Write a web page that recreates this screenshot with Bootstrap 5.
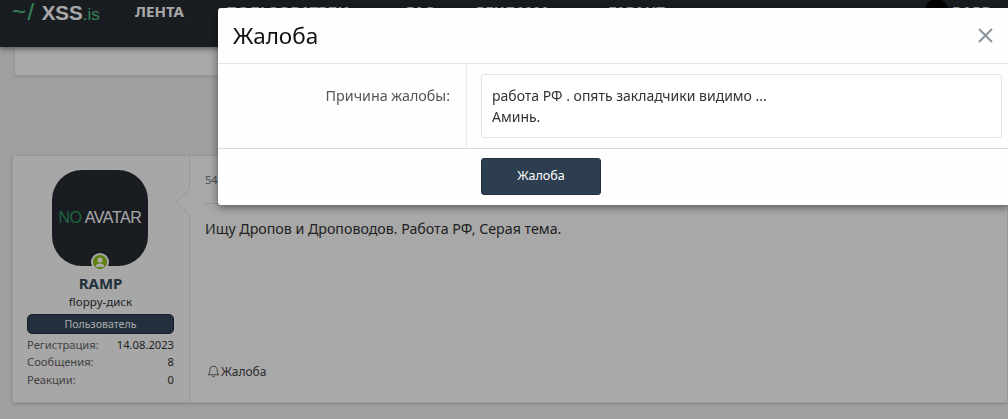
<!DOCTYPE html>
<html lang="ru">
  <head>
    <meta charset="UTF-8" />
    <meta name="viewport" content="width=device-width, initial-scale=1.0" />
    <title>Жалоба</title>
    <link
      href="https://cdn.jsdelivr.net/npm/bootstrap@5.3.3/dist/css/bootstrap.min.css"
      rel="stylesheet"
    />
    <style>
      html,
      body {
        height: 100%;
        overflow: hidden;
      }
      body {
        background: #f1f2f4;
        font-family: "Noto Sans", "Open Sans", sans-serif;
        font-size: 14px;
        color: #333;
      }
      .top-bar {
        height: 47px;
        background: #262c35;
        box-shadow: 0 2px 5px rgba(0, 0, 0, 0.45);
        padding-left: 12px;
        color: #fff;
        position: relative;
        z-index: 1;
      }
      .logo-text {
        font-family: "Liberation Sans", sans-serif;
        width: 123px;
        line-height: 24px;
      }
      .logo-tilde {
        color: #55c585;
        font-size: 24px;
        letter-spacing: 1.5px;
        margin-right: 6px;
      }
      .logo-xss {
        font-weight: 700;
        font-size: 20.500px;
        color: #fff;
      }
      .logo-is {
        color: #55c585;
        font-size: 17px;
      }
      .top-link {
        font-weight: 700;
        font-size: 15px;
        line-height: 22px;
        color: #fff;
        text-decoration: none;
      }
      .link-a { width: 91px; }
      .link-b { width: 180px; }
      .link-c { width: 70px; }
      .link-d { width: 132px; }
      .link-e { width: 317px; }
      .user-dot {
        width: 23px;
        height: 23px;
        border-radius: 50%;
        background: #000;
        margin: -1px 4px 0 0;
      }
      .old-card {
        height: 29px;
        margin-left: 14px;
        background: #fff;
        border: 1px solid #e6e7e9;
        border-top: 0;
        box-shadow: 0 1px 2px rgba(0, 0, 0, 0.12);
      }
      .post-card {
        margin-top: 79px;
        margin-left: 12px;
        height: 248px;
        background: #fff;
        border: 1px solid #e8e9eb;
        box-shadow: 0 1px 3px rgba(0, 0, 0, 0.18);
      }
      .user-cell {
        width: 177px;
        flex: none;
        padding: 14px 15px 0 14px;
        border-right: 1px solid #e4e5e7;
        position: relative;
        background: #fdfdfd;
      }
      .user-cell::before,
      .user-cell::after {
        content: "";
        position: absolute;
        top: 32px;
        border: 14px solid transparent;
        border-left: 0;
      }
      .user-cell::before {
        right: -1px;
        border-right-color: #e4e5e7;
      }
      .user-cell::after {
        right: -2px;
        border-right-color: #fff;
      }
      .avatar-box {
        width: 96px;
        height: 96px;
        margin-left: 25px;
        border-radius: 30px;
        background: #262c35;
        font-family: "Liberation Sans", sans-serif;
        font-size: 16px;
        letter-spacing: -0.4px;
        color: #fff;
        position: relative;
      }
      .avatar-no {
        color: #2f9a62;
        margin-right: 3px;
      }
      .online-dot {
        position: absolute;
        left: 39px;
        bottom: -5px;
        width: 18px;
        height: 18px;
        border-radius: 50%;
        background: #8cc314;
        border: 2px solid #fff;
      }
      .user-name {
        margin-top: 7px;
        font-size: 15px;
        line-height: 20px;
        font-weight: 700;
        color: #34495e;
      }
      .user-title {
        font-size: 11.500px;
        line-height: 17px;
      }
      .user-role {
        display: block;
        margin-top: 4px;
        height: 20px;
        line-height: 18px;
        background: #34495e;
        border: 1px solid #1f2c3a;
        border-radius: 5px;
        font-size: 10.600px;
        color: #fff;
      }
      .user-stats {
        margin-top: 2px;
        font-size: 11.200px;
        line-height: 17.300px;
        color: #666;
      }
      .stat-val {
        color: #333;
      }
      .post-cell {
        padding: 16px 15px 0;
        min-width: 0;
      }
      .post-date {
        font-size: 11px;
        color: #777;
        height: 32px;
        border-bottom: 1px solid #e4e5e7;
      }
      .post-text {
        margin-top: 15px;
        font-size: 14.200px;
        line-height: 20px;
      }
      .post-report {
        margin-top: 124px;
        margin-left: 2px;
        gap: 1px;
        font-size: 12px;
        line-height: 17px;
        color: #444;
        text-decoration: none;
      }
      .page-shade {
        position: fixed;
        inset: 0;
        background: #000;
        opacity: 0.34;
        z-index: 2;
      }
      .report-dialog {
        position: absolute;
        left: 218px;
        top: 8px;
        right: 0;
        width: auto;
        z-index: 3;
        border: 0;
        border-radius: 3px 0 0 3px;
        box-shadow: 0 2px 9px rgba(0, 0, 0, 0.5);
        background: #fefefe;
      }
      .report-head {
        height: 56px;
        padding: 0 15px 0 15px;
        border-bottom: 1px solid #e4e5e7;
      }
      .report-title {
        font-size: 22.500px;
        line-height: 28px;
        font-weight: 400;
        color: #111;
      }
      .report-x {
        width: 15px;
        height: 15px;
        margin-right: 0;
        border: 0;
        padding: 0;
        background: none;
        line-height: 0;
      }
      .report-row {
        height: 85px;
        border-bottom: 1px solid #d9dbdd;
      }
      .report-label {
        width: 249px;
        flex: none;
        padding: 22px 16px 0 0;
        text-align: right;
        color: #555;
        font-size: 14.300px;
        line-height: 20px;
        border-right: 1px solid #e9eaec;
      }
      .report-field {
        flex: 1;
        padding: 10px 6px 10px 14px;
      }
      .report-area {
        height: 64px;
        padding: 10px 10px 8px;
        font-size: 14px;
        line-height: 21px;
        color: #333;
        border: 1px solid #e2e3e5;
        border-radius: 3px;
        resize: none;
        background: #fff;
      }
      .report-foot {
        height: 56px;
        padding: 9px 0 0 263px;
      }
      .report-btn {
        width: 120px;
        height: 37px;
        padding: 0;
        font-size: 12.500px;
        background: #2c3e50;
        border: 1px solid #22303f;
        border-radius: 3px;
        color: #fff;
      }
    </style>
  </head>
  <body>
    <header class="top-bar d-flex">
      <div class="logo-text">
        <span class="logo-tilde">~/</span><span class="logo-xss">XSS</span><span class="logo-is">.is</span>
      </div>
      <nav class="d-flex flex-grow-1">
        <a class="top-link link-a" href="#">ЛЕНТА</a>
        <a class="top-link link-b" href="#">ПОЛЬЗОВАТЕЛИ</a>
        <a class="top-link link-c" href="#">FAQ</a>
        <a class="top-link link-d" href="#">РЕКЛАМА</a>
        <a class="top-link link-e" href="#">ГАРАНТ</a>
        <span class="user-dot flex-shrink-0"></span>
        <a class="top-link" href="#">RAPP</a>
      </nav>
    </header>

    <div class="old-card"></div>

    <article class="post-card d-flex">
      <div class="user-cell text-center">
        <div class="avatar-box d-flex align-items-center justify-content-center">
          <span><span class="avatar-no">NO</span>AVATAR</span>
          <span class="online-dot d-flex align-items-center justify-content-center">
            <svg width="12" height="12" viewBox="0 0 12 12" fill="#fff">
              <circle cx="6" cy="4" r="2.600" />
              <path d="M1.500 11c0-2.600 2-3.600 4.500-3.600s4.500 1 4.500 3.600z" />
            </svg>
          </span>
        </div>
        <div class="user-name">RAMP</div>
        <div class="user-title">floppy-диск</div>
        <span class="user-role">Пользователь</span>
        <div class="user-stats">
          <div class="d-flex justify-content-between"><span>Регистрация:</span><span class="stat-val">14.08.2023</span></div>
          <div class="d-flex justify-content-between"><span>Сообщения:</span><span class="stat-val">8</span></div>
          <div class="d-flex justify-content-between"><span>Реакции:</span><span class="stat-val">0</span></div>
        </div>
      </div>
      <div class="post-cell flex-grow-1">
        <div class="post-date">54</div>
        <div class="post-text">Ищу Дропов и Дроповодов. Работа РФ, Серая тема.</div>
        <a class="post-report d-inline-flex align-items-center" href="#">
          <svg width="13" height="13" viewBox="0 0 16 16" fill="none" stroke="#555" stroke-width="1.100">
            <path d="M8 1.500c-2.800 0-4.500 2-4.500 4.700 0 3.300-1.200 4.800-2.300 5.800h13.600c-1.100-1-2.300-2.500-2.300-5.800C12.500 3.500 10.800 1.500 8 1.500z" />
            <path d="M6.300 13.200c.2 1 .9 1.500 1.700 1.500s1.500-.5 1.700-1.500" />
          </svg>
          Жалоба
        </a>
      </div>
    </article>

    <div class="page-shade"></div>

    <div class="modal-content report-dialog">
      <div class="report-head d-flex align-items-center justify-content-between">
        <h5 class="report-title m-0">Жалоба</h5>
        <button type="button" class="report-x" aria-label="Закрыть">
          <svg width="15" height="15" viewBox="0 0 15 15" stroke="#8a949c" stroke-width="2" fill="none">
            <path d="M1 1l13 13M14 1L1 14" />
          </svg>
        </button>
      </div>
      <div class="report-row d-flex">
        <div class="report-label">Причина жалобы:</div>
        <div class="report-field">
          <textarea class="form-control report-area" readonly>работа РФ . опять закладчики видимо ...
Аминь.</textarea>
        </div>
      </div>
      <div class="report-foot">
        <button type="button" class="btn report-btn">Жалоба</button>
      </div>
    </div>

    <script src="https://cdn.jsdelivr.net/npm/bootstrap@5.3.3/dist/js/bootstrap.bundle.min.js"></script>
  </body>
</html>
